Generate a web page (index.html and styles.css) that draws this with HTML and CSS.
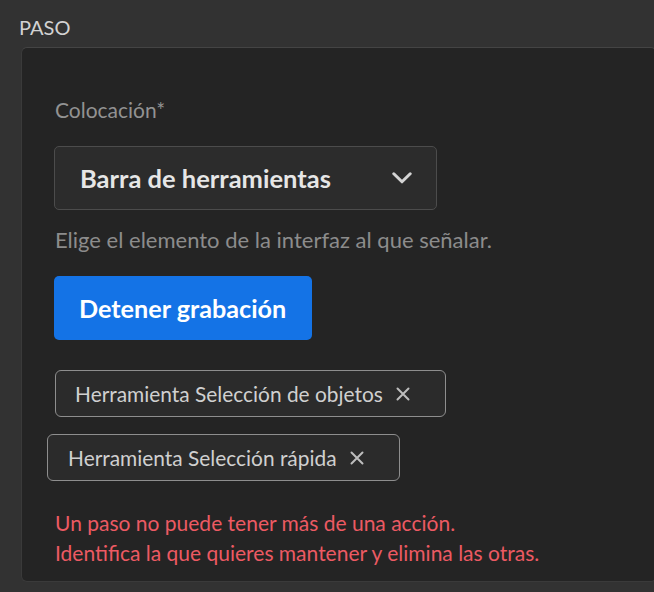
FILE: index.html
```html
<!DOCTYPE html>
<html lang="es">
<head>
<meta charset="utf-8">
<link rel="stylesheet" href="styles.css">
</head>
<body>
<div class="section-title">PASO</div>
<div class="panel">
  <div class="field-label">Colocación*</div>
  <button class="picker" type="button">
    <span class="picker-value">Barra de herramientas</span>
    <svg class="chevron" width="20" height="12" viewBox="0 0 20 12"><polyline points="1.8,1.8 10,9.8 18.2,1.8" fill="none" stroke="#d4d4d4" stroke-width="3" stroke-linecap="round" stroke-linejoin="round"/></svg>
  </button>
  <div class="help-text">Elige el elemento de la interfaz al que señalar.</div>
  <button class="cta" type="button">Detener grabación</button>
  <div class="tags">
    <div class="tag"><span>Herramienta Selección de objetos</span><svg class="x" width="14" height="14" viewBox="0 0 14 14"><path d="M1.5 1.5L12.5 12.5M12.5 1.5L1.5 12.5" stroke="#bdbdbd" stroke-width="2" stroke-linecap="round"/></svg></div>
    <div class="tag tag-shift"><span>Herramienta Selección rápida</span><svg class="x" width="14" height="14" viewBox="0 0 14 14"><path d="M1.5 1.5L12.5 12.5M12.5 1.5L1.5 12.5" stroke="#bdbdbd" stroke-width="2" stroke-linecap="round"/></svg></div>
  </div>
  <div class="error">Un paso no puede tener más de una acción.<br>Identifica la que quieres mantener y elimina las otras.</div>
</div>
</body>
</html>
```

FILE: styles.css
```css
html, body {
  margin: 0;
  padding: 0;
  background: #323232;
  height: 100%;
  overflow: hidden;
}
body {
  font-family: Lato, "Open Sans", sans-serif;
  color: #d0d0d0;
}
.section-title {
  padding: 14px 0 0 19px;
  height: 47px;
  box-sizing: border-box;
  font-size: 20px;
  line-height: 26px;
  color: #d2d2d2;
}
.panel {
  margin: 0 -3px 0 21px;
  height: 535px;
  box-sizing: border-box;
  background: #242424;
  border: 1px solid #3a3a3a;
  border-top-color: #444444;
  border-radius: 6px;
  padding: 50px 20px 0 33px;
}
.field-label {
  font-size: 21px;
  line-height: 24px;
  color: #929292;
  height: 48px;
}
.picker {
  display: flex;
  align-items: center;
  justify-content: space-between;
  width: 383px;
  height: 64px;
  margin: 0 0 0 -1px;
  padding: 0 24px 0 25px;
  box-sizing: border-box;
  background: #2c2c2c;
  border: 1px solid #4c4c4c;
  border-radius: 5px;
  font-family: inherit;
  font-weight: 700;
  font-size: 25.5px;
  color: #e6e6e6;
}
.help-text {
  margin-top: 18px;
  font-size: 22px;
  line-height: 24px;
  color: #8c8c8c;
}
.cta {
  display: block;
  margin: 24px 0 0 -1px;
  height: 64px;
  padding: 0 26px 0 25px;
  background: #1473e6;
  border: none;
  border-radius: 5px;
  font-family: inherit;
  font-weight: 700;
  font-size: 25.2px;
  color: #ffffff;
}
.tags {
  margin-top: 30px;
  display: flex;
  flex-direction: column;
  align-items: flex-start;
  gap: 17px;
}
.tag {
  display: inline-flex;
  align-items: center;
  gap: 13px;
  height: 47px;
  box-sizing: border-box;
  padding: 0 35px 0 19px;
  background: #2b2b2b;
  border: 1.5px solid #8e8e8e;
  border-radius: 6px;
  font-size: 20.9px;
  color: #d0d0d0;
}
.tag-shift {
  margin-left: -8px;
  padding-left: 20px;
}
.x {
  flex: none;
}
.error {
  margin-top: 27px;
  font-size: 21px;
  line-height: 30px;
  color: #ec5a63;
}
```
